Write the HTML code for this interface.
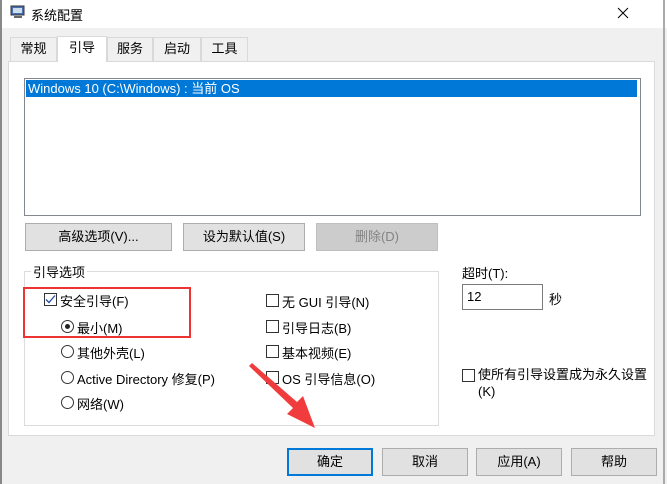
<!DOCTYPE html><html><head><style>
*{box-sizing:border-box;margin:0;padding:0}
body{width:667px;height:484px;overflow:hidden;background:#f0f0f0;font-family:"Liberation Sans","Noto Sans CJK SC",sans-serif;font-size:13px;color:#000;position:relative}
.a{position:absolute}
.btn{position:absolute;background:#e1e1e1;border:1px solid #adadad;text-align:center;line-height:25px;font-size:13px}
.cb{position:absolute;width:13px;height:13px;border:1px solid #333;background:#fff}
.rb{position:absolute;width:13px;height:13px;border:1px solid #333;border-radius:50%;background:#fff}
.t{position:absolute;font-size:13px;white-space:nowrap}
.tab{position:absolute;top:37px;height:24px;border:1px solid #d9d9d9;border-bottom:none;background:#f0f0f0;text-align:center;line-height:22px}
</style></head><body>
<div class="a" style="left:0;top:0;width:667px;height:28px;background:#fff"></div>
<div class="a" style="left:0;top:0;width:2px;height:484px;background:#888"></div>
<div class="a" style="left:663px;top:0;width:2px;height:484px;background:#aaa"></div>
<svg class="a" style="left:10px;top:4px" width="16" height="16"><rect x="1" y="2" width="13" height="9" fill="#4a6fb0" stroke="#333"/><rect x="3" y="4" width="9" height="5" fill="#cde"/><rect x="4" y="12" width="8" height="2" fill="#666"/></svg>
<div class="t" style="left:31px;top:5px">系统配置</div>
<svg class="a" style="left:617px;top:7px" width="12" height="12"><path d="M1 1L11 11M11 1L1 11" stroke="#000" stroke-width="1"/></svg>
<div class="a" style="left:8px;top:61px;width:647px;height:375px;background:#fff;border:1px solid #d9d9d9"></div>
<div class="tab" style="left:10px;width:47px">常规</div>
<div class="tab" style="left:57px;top:36px;width:50px;height:26px;background:#fff">引导</div>
<div class="tab" style="left:107px;width:46px">服务</div>
<div class="tab" style="left:153px;width:48px">启动</div>
<div class="tab" style="left:201px;width:47px">工具</div>
<div class="a" style="left:24px;top:78px;width:617px;height:138px;border:1px solid #828790;background:#fff"></div>
<div class="a" style="left:26px;top:80px;width:611px;height:17px;background:#0078d7;color:#fff;line-height:17px;padding-left:2px">Windows 10 (C:\Windows) : 当前 OS</div>
<div class="btn" style="left:25px;top:223px;width:147px;height:28px">高级选项(V)...</div>
<div class="btn" style="left:183px;top:223px;width:122px;height:28px">设为默认值(S)</div>
<div class="btn" style="left:316px;top:223px;width:122px;height:28px;background:#ccc;border-color:#bfbfbf;color:#838383">删除(D)</div>
<div class="a" style="left:24px;top:271px;width:415px;height:155px;border:1px solid #dcdcdc"></div>
<div class="t" style="left:31px;top:262px;background:#fff;padding:0 2px">引导选项</div>
<div class="a" style="left:23px;top:287px;width:168px;height:51px;border:2px solid #ee3333"></div>
<div class="cb" style="left:44px;top:293px;border-color:#333"><svg width="11" height="11" style="position:absolute;left:0;top:0"><path d="M1 5.5L4 8.5L10 1.5" stroke="#1f4fa0" stroke-width="1.3" fill="none"/></svg></div>
<div class="t" style="left:60px;top:291px">安全引导(F)</div>
<div class="rb" style="left:61px;top:320px"><div style="position:absolute;left:3px;top:3px;width:5px;height:5px;border-radius:50%;background:#222"></div></div>
<div class="t" style="left:77px;top:318px">最小(M)</div>
<div class="rb" style="left:61px;top:345px"></div><div class="t" style="left:77px;top:343px">其他外壳(L)</div>
<div class="rb" style="left:61px;top:371px"></div><div class="t" style="left:77px;top:369px">Active Directory 修复(P)</div>
<div class="rb" style="left:61px;top:396px"></div><div class="t" style="left:77px;top:394px">网络(W)</div>
<div class="cb" style="left:266px;top:294px"></div><div class="t" style="left:282px;top:292px">无 GUI 引导(N)</div>
<div class="cb" style="left:266px;top:320px"></div><div class="t" style="left:282px;top:318px">引导日志(B)</div>
<div class="cb" style="left:266px;top:345px"></div><div class="t" style="left:282px;top:343px">基本视频(E)</div>
<div class="cb" style="left:266px;top:371px"></div><div class="t" style="left:282px;top:369px">OS 引导信息(O)</div>
<div class="t" style="left:462px;top:263px">超时(T):</div>
<div class="a" style="left:462px;top:284px;width:81px;height:26px;border:1px solid #7a7a7a;background:#fff;padding:4px 0 0 4px">12</div>
<div class="t" style="left:549px;top:289px">秒</div>
<div class="cb" style="left:462px;top:369px"></div>
<div class="t" style="left:478px;top:366px;line-height:17px">使所有引导设置成为永久设置<br>(K)</div>
<svg class="a" style="left:0;top:0" width="667" height="484"><path d="M249 366L252 363L297 402L303 396L315 428L287 414L293 408Z" fill="#f03c3c"/></svg>
<div class="btn" style="left:287px;top:448px;width:86px;height:28px;border:2px solid #0078d7;line-height:24px">确定</div>
<div class="btn" style="left:382px;top:448px;width:86px;height:28px">取消</div>
<div class="btn" style="left:476px;top:448px;width:86px;height:28px">应用(A)</div>
<div class="btn" style="left:571px;top:448px;width:86px;height:28px">帮助</div>
</body></html>
